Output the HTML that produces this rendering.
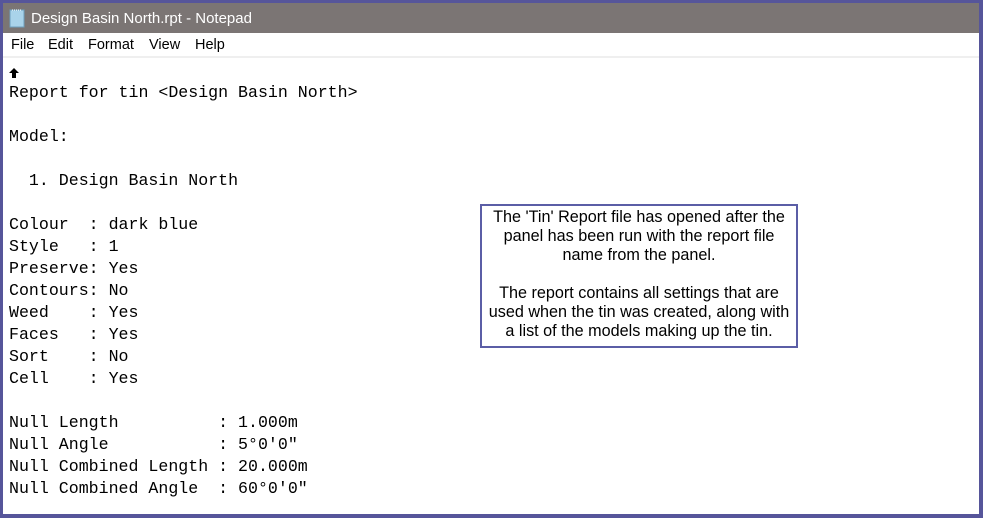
<!DOCTYPE html>
<html><head><style>
body{margin:0;width:983px;height:518px;background:#56559a;position:relative;overflow:hidden;font-family:"Liberation Sans",sans-serif}
#win{position:absolute;left:3px;top:3px;width:976px;height:511px;background:#fff}
#title{position:absolute;left:0;top:0;width:976px;height:30px;background:#7b7574;color:#fff;font-size:15px}
#title span{position:absolute;left:28px;top:7px}
#menu{position:absolute;left:0;top:30px;height:23px;width:976px;border-bottom:2px solid #efefef;font-size:14.5px;color:#000}
#menu span{position:absolute;top:4px}
pre{position:absolute;left:6px;top:79px;margin:0;font-family:"Liberation Mono",monospace;font-size:16.6px;line-height:22px;color:#000}
#box{position:absolute;left:480px;top:204px;width:314px;height:140px;border:2px solid #5b5ea6;background:#fff;text-align:center;font-size:16.2px;line-height:19px;color:#000;box-sizing:content-box;white-space:nowrap}
#box div{padding-top:2px}
</style></head><body>
<div id="win">
<div id="title"><svg style="position:absolute;left:6px;top:5px" width="16" height="20"><rect x="1" y="2" width="14" height="17" fill="#a9d3ea" stroke="#6d9fbd"/><line x1="3" y1="2" x2="13" y2="2" stroke="#fff" stroke-dasharray="1,1"/></svg><span>Design Basin North.rpt - Notepad</span></div>
<div id="menu"><span style="left:8px">File</span><span style="left:45px">Edit</span><span style="left:85px">Format</span><span style="left:146px">View</span><span style="left:192px">Help</span></div>
<svg style="position:absolute;left:6px;top:65px" width="10" height="10"><path d="M5 0 L10 5 L7 5 L7 10 L3 10 L3 5 L0 5 Z" fill="#000"/></svg>
<pre>Report for tin &lt;Design Basin North&gt;

Model:

  1. Design Basin North

Colour  : dark blue
Style   : 1
Preserve: Yes
Contours: No
Weed    : Yes
Faces   : Yes
Sort    : No
Cell    : Yes

Null Length          : 1.000m
Null Angle           : 5°0'0"
Null Combined Length : 20.000m
Null Combined Angle  : 60°0'0"</pre>
</div>
<div id="box"><div>The 'Tin' Report file has opened after the<br>panel has been run with the report file<br>name from the panel.<br><br>The report contains all settings that are<br>used when the tin was created, along with<br>a list of the models making up the tin.</div></div>
</body></html>
